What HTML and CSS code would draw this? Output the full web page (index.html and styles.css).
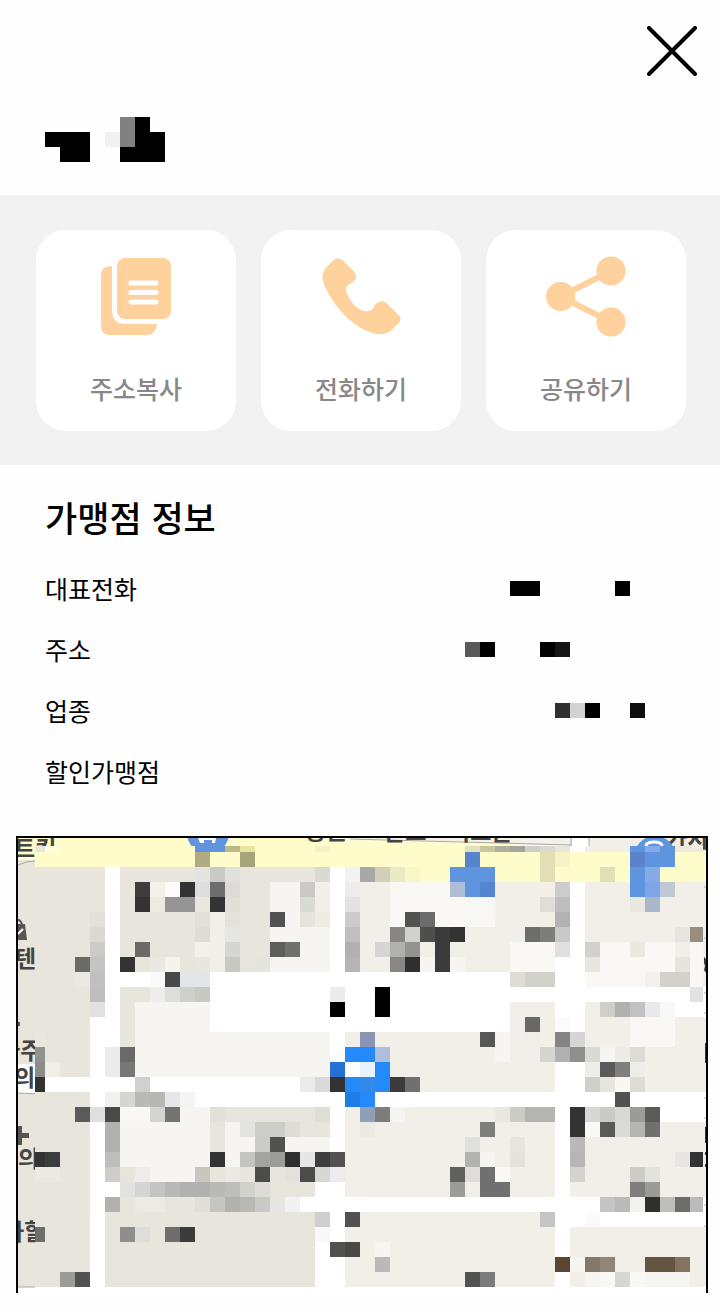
FILE: index.html
```html
<!doctype html>
<html lang="ko">
  <head>
    <meta charset="utf-8">
    <meta name="viewport" content="width=device-width, initial-scale=1">
    <title>가맹점 정보</title>
    <link rel="stylesheet" href="styles.css">
  </head>
  <body>
    <header class="header">
      <button type="button" class="close" aria-label="닫기">
        <svg viewBox="0 0 50 50" width="50" height="50">
          <path d="M2 2L48 48M48 2L2 48" stroke="#000" stroke-width="4" stroke-linecap="round"/>
        </svg>
      </button>
    </header>
    <div class="store-name">
      <svg class="blocks" viewBox="0 0 120 45" width="120" height="45">
        <path d="M0 15h45v30h-30v-15h-15zM90 0h15v15h15v30h-45v-15h15z"/>
        <path fill="#808080" d="M75 0h15v30h-15z"/>
        <path fill="#f1f1f1" d="M60 15h15v15h-15z"/>
      </svg>
    </div>
    <div class="actions">
      <button type="button" class="card">
        <svg class="icon" viewBox="0 0 80 80">
          <path d="M16 10V54Q16 68 29 68H61Q60 79 51 79H14Q5 79 5 70V19Q5 10 16 10Z"/>
          <rect x="21" y="2" width="54" height="61" rx="8"/>
          <path d="M35 27H60M35 36.5H60M35 46H60" stroke="#fff" stroke-width="5" stroke-linecap="round"/>
        </svg>
        <span>주소복사</span>
      </button>
      <button type="button" class="card">
        <svg class="icon" viewBox="0 0 80 80">
          <path d="M5 12L11 5.500Q16 0 22 4.500L32 14.500Q38 21 32.500 25.500Q30.500 28 28 28Q23.500 32 26 38Q32 52 43 55Q50 56 52.500 52Q53 49 56 47Q61 43.500 66 47.500L77 58.500Q81.500 62.500 78 66.500L69 75.500Q62 79.500 53 77.500Q24 69 5 33Q-2 19 5 12Z"/>
        </svg>
        <span>전화하기</span>
      </button>
      <button type="button" class="card">
        <svg class="icon" viewBox="0 0 80 80">
          <path d="M65 15L14.500 40.500L65 66" fill="none" stroke="#ffd19d" stroke-width="6"/>
          <circle cx="65" cy="15" r="14.600"/>
          <circle cx="14.600" cy="40.500" r="14.600"/>
          <circle cx="65" cy="66" r="14.600"/>
        </svg>
        <span>공유하기</span>
      </button>
    </div>
    <section class="info">
      <h2>가맹점 정보</h2>
      <dl>
        <div class="row">
          <dt>대표전화</dt>
          <dd>
            <svg class="blocks" viewBox="0 0 210 15" width="210" height="15">
              <path d="M45 0h30v15h-30zM150 0h15v15h-15z"/>
            </svg>
          </dd>
        </div>
        <div class="row">
          <dt>주소</dt>
          <dd>
            <svg class="blocks" viewBox="0 0 210 15" width="210" height="15">
              <path fill="#595959" d="M0 0h15v15h-15z"/>
              <path d="M15 0h15v15h-15zM75 0h15v15h-15z"/>
              <path fill="#151515" d="M90 0h15v15h-15z"/>
            </svg>
          </dd>
        </div>
        <div class="row">
          <dt>업종</dt>
          <dd>
            <svg class="blocks" viewBox="0 0 210 15" width="210" height="15">
              <path fill="#303030" d="M90 0h15v15h-15z"/>
              <path fill="#d2d2d2" d="M105 0h15v15h-15z"/>
              <path d="M120 0h15v15h-15z"/>
              <path fill="#0d0d0d" d="M165 0h15v15h-15z"/>
            </svg>
          </dd>
        </div>
        <div class="row">
          <dt>할인가맹점</dt>
          <dd></dd>
        </div>
      </dl>
    </section>
    <div class="map">
      <svg viewBox="18 838 688 455">
        <defs>
          <clipPath id="tiles-clip"><path d="M35 846H703V1293H35Z"/></clipPath>
        </defs>
        <!-- ground and roads -->
        <path fill="#e7e5dc" d="M18 838H60V1287H18Z"/>
        <path fill="#fefccb" d="M18 838H320L572 846V860H18Z"/>
        <path fill="#f2f1ee" d="M350 838H572V846Z"/>
        <path fill="#f2efe8" d="M589 838H706V1287H589Z"/>
        <path fill="#fefccb" d="M700 852H706V882H700Z"/>
        <path fill="#fff" d="M18 1064H40V1093H18ZM700 987H706V1017H700ZM700 1092H706V1122H700ZM700 1197H706V1227H700Z"/>
        <path fill="none" stroke="#aaa8a2" d="M18 865Q26 861 35 861M18 1093L36 1094M18 1287H36M350 839L572 845M571 838V846M589 838V846"/>
        <path fill="none" stroke="#aaa" d="M704 887h2M704 938h2M704 993h2M704 1013h2M704 1098h2M704 1118h2M704 1205h2M704 1226h2"/>
        <path fill="#333" d="M705 1043h1v20h-1zM705 1127h1v16h-1zM704 957l2 2v14l-2-3 1-4-1-3zM705 1152h1v3h-1zM705 1164h1v3h-1z"/>
        <!-- labels and markers cut by the edges -->
        <g class="place">
          <text x="14" y="857">트킹</text>
          <text x="305" y="839">송골</text>
          <text x="384" y="840">든드</text>
          <text x="449" y="840">미크든</text>
          <text x="666" y="847">가지</text>
          <text x="15" y="967">텐</text>
          <text x="-1" y="1059">아주</text>
          <text x="14" y="1086">의</text>
          <text x="18" y="1167">의</text>
          <text x="3" y="1240">하할</text>
        </g>
        <circle cx="208" cy="833" r="21" fill="#5f94de"/>
        <path d="M198 838h18l-1 5h-3v-3h-8v3h-4z" fill="#fff"/>
        <circle cx="655" cy="857" r="21" fill="#5f94de"/>
        <path d="M646 846Q646 842 654 842T662 846" fill="none" stroke="#fff" stroke-width="3"/>
        <path d="M18 924h7l2 16h-9z" fill="#555"/>
        <path d="M18 920q3 0 4 5" fill="none" stroke="#555" stroke-width="2"/>
        <path d="M18 934l5-5" stroke="#fff" stroke-width="2"/>
        <path d="M18 1126h4v7h7v5h-7v7h-4zM18 1022h2v4h-2z" fill="#555"/>
        <g id="tiles" clip-path="url(#tiles-clip)" shape-rendering="crispEdges"></g>
      </svg>
    </div>
    <script src="map.js"></script>
  </body>
</html>
```

FILE: styles.css
```css
body {
  margin: 0;
  background: #fefefe;
  color: #000;
  font-family: "Noto Sans CJK KR", sans-serif;
  font-size: 25px;
}
button {
  border: 0;
  padding: 0;
  font: inherit;
  cursor: pointer;
}
svg {
  display: block;
}
.header {
  display: flex;
  justify-content: flex-end;
  padding: 26px 23px 0;
}
.close {
  background: none;
}
.store-name {
  padding: 41px 45px 33px;
}
.blocks {
  shape-rendering: crispEdges;
}
.actions {
  display: grid;
  grid-template-columns: repeat(3, 1fr);
  gap: 25px;
  padding: 35px 34px 34px 36px;
  background: #f2f2f2;
}
.card {
  display: flex;
  flex-direction: column;
  align-items: center;
  gap: 34px;
  padding: 26px 0 25px;
  border-radius: 30px;
  background: #fff;
  color: #888;
  font-weight: 500;
  line-height: 36px;
}
.icon {
  width: 80px;
  height: 80px;
  overflow: visible;
  fill: #ffd19d;
}
.info {
  padding: 25px 45px 34px;
}
.info h2 {
  margin: 0 0 14px;
  font-size: 35px;
  font-weight: 500;
  line-height: 54px;
}
.info dl {
  margin: 0;
}
.row {
  display: flex;
  justify-content: space-between;
  align-items: center;
  line-height: 61px;
}
.row dd {
  margin: 0;
}
.map {
  margin: 0 12px 15px 16px;
  border: 2px solid #000;
  border-bottom: 0;
  background: #fff;
}
.map svg {
  width: 100%;
}
.place {
  font-size: 23px;
  font-weight: 700;
  fill: #444;
}
```

FILE: map.js
```js
// Each row is a list of runs: start column + colour, up to the next run.
const SIZE = 15;
const TOP = 837;
const LAST = 47;
const colors = {
  w: '#ffffff', // road
  y: '#fefccb', // main road
  b: '#e7e5dc',
  l: '#f2efe8',
  p: '#f6f5f1',
  o: '#f9f8f4',
  k: '#333333',
  m: '#5f94de',
  c: '#248afc'
};

const rows = [
  '2#e8e6dc 3#fefcda 4y 13m 15#bdb987 16#e9e5a0 17y 21#f5f0c8 22y 31#e3e0c0 32#c8c5a0 33#b0ae9c 34#a5a5a0 35#cfcfc9 36#dcdacf 37#e8e5dd 38w 39l 42m 43#82abe8 44m 45#eeebdd',
  '2y 13#b0ab82 14y 16#a7a37b 17y 31#5785cb 32y 36#e3dfb5 37#f7f3c4 38y 42#5b82ca 43m 45y',
  '2b 7w 8b 13#e4e5e2 14#c9cac6 15#e0e0dc 16b 21#dadad5 22w 23#f3f3f2 24#a8a8a7 25#d0d0b8 26#e9e9c4 27#faf6c8 28y 30m 33y 36#e3dfb5 37y 40#e3dfb5 41y 42m 43#82abe8 44y',
  '2b 7w 8b 9#3d3d3d 10#f3f1ec 11#fbfbfa 12k 13#dddddf 14#6d6d6d 15#dcdbd5 16b 18p 20#c9cac5 21l 22w 23#ececed 24l 26o 30#afbdd7 31m 32#5585d0 33l 37#cccccb 38w 39l 42m 43#7da6e6 44#bfc9d6 45l',
  '2b 7w 8b 9k 10#edeae2 11#959595 13#e9e7e0 14k 15#e0ded6 16b 18p 20#dadad5 21l 22w 23#e2e2e2 24l 26o 33l 36#deddd8 37#bebebd 38w 39l 42#e9e8e2 43#a9b8c8 44l',
  '2b 6#e2e0d8 7w 8b 13#e1dfd7 14l 15#e2e1da 16b 18#525252 19p 20#e5e3dc 21#eeebe3 22w 23#cbcbcb 24l 26o 27#525252 28#6b6b6b 29o 33l 37#b2b2b2 38w 39l',
  '2b 6#dbd9d1 7w 8b 13#dedcd4 14l 15#e6e6e2 16b 18p 22w 23#bfbfbf 24l 26#868686 27#d1d1d0 28#4e4e4c 29#3b3b3b 30k 31l 35#6d6d6c 36#7d7d7b 37#c9c9c9 38w 39l 45#e6e5df 46#998d7e',
  '2b 6#cccbc5 7w 8b 9#6a6b67 10b 13#f3f0e9 14l 15#d5d6d3 16b 18#5e5e5c 19#707070 20p 22w 23#b1b1b1 24l 25#d5d5d3 26#b0b1ad 27#92938f 28l 29#3b3b3b 30l 34o 37#e0e0e0 38w 39#d1d1ce 40o 42#e9e8e1 43o 45l 46o',
  '2b 5#6a6a67 6#c4c4c5 7w 8k 9b 10#e9e8e3 11#f4f3ee 12b 13#e7e6e0 14l 15#c7c8c1 16b 17#e5e5e0 18p 22w 23#b5b5b5 24l 26#878787 27#2f2f2e 28p 29#3b3b3b 30p 31l 34o 37w 39#e7e6df 40o 45#e5e4de 46o',
  '2b 5#ebe9e2 6#c0c0c1 7w 10#fafafa 11#484848 12#e4e5e6 14w 34#dedcd5 35#d2d2cd 37w 39o 43#f2f1ee 44#d2d1cb 46o',
  '2b 6#bebebf 7w 8b 10#ededea 11#dddeda 12#cfd0ca 13#c8c9c1 14w 22#ebebeb 23w 25#000 26w 46#e2e2e3',
  '2b 6#e0e1e3 7w 8b 9p 14w 22#000 23w 25#000 26w 34l 37w 39l 40#cfcfca 41#b0b0b0 42#c1c1c1 43#e8e9ea 44#f8f8f8 45w',
  '2b 6w 8b 9p 14w 34l 35#686868 36l 37#fbfbfb 38w 39l 42o 45l',
  '2#e9e7e0 3b 6w 8b 9p 22w 23l 24#8b94b3 25l 32#565654 33p 34l 35#f0eeea 36l 37#848483 38#d5d5d5 39l 42o 45l',
  '2#929292 3b 6w 7#ebebeb 8#6a6a6a 9p 22w 23c 25#adbfdd 26l 33p 34l 36#d5d5d1 37#b0b0b0 38#8f8f8f 39#dadad4 40p 41#ecebe6 42#dddcd6 43l',
  '2#8c8c8c 3#f1eee6 4b 6w 7#ebebec 8#777777 9p 22#276fd2 23w 24#e9f3fe 25c 26l 37w 39#edede9 40#5a5a5a 41#7f7f7f 42#ededea 43l',
  '2k 3w 9#d0d0d0 10w 20#ebebec 21#dadada 22k 23c 24#3389ea 25c 26#3b3b3b 27#707070 28l 37w 39#d0d0cb 40#e6e5de 41#f8f7f3 42#dddbd4 43l',
  '2b 6w 7#f1f1f0 8#d5d5d1 9#b9b9b7 10#b7b8b5 11#e7e7e9 12#f4f4f3 13w 23#1f7de8 24c 25w 41#525252 42w',
  '2b 5#5a5a5a 6#e0dfdf 7#494947 8o 10#d4d4d0 11#737372 12p 14#e3e1d7 15b 21#dfded6 22w 23l 24#909fb8 25#7d7d7b 26p 27l 33#e9e7df 34#ccccc7 35#b4b4b2 37w 38k 39#d7d7d5 40#cacac9 41#d8d8d7 42#9b9b9a 43#5a5a59 44w',
  '2b 6w 7#b1b1af 8p 14b 15p 16#e3e3df 17#cdcec7 19#deddd4 20b 22w 23l 24#ece9e2 25l 32#7e7e7d 33l 37w 38k 39o 40#5a5a59 41#dadad7 42#b4b4b1 43#707070 44l',
  '2b 6w 7#b1b1af 8p 14b 15p 17#cbccca 18#525252 19p 22w 23l 31#dfdfdb 32l 34#e6e5df 35l 37w 38#b9b9b8 39l',
  '2k 3#3c3c3c 4b 6w 7#bebebc 8p 14k 15p 16#c4c4c3 17#a3a3a1 18#9c9c9a 19#2f2f2f 20#e6e6e7 21#3f3f3f 22#525252 23l 31#b2b2af 32p 33l 34#e3e2dd 35l 37w 38#b6b6b4 39l 45#e8e6e1 46k',
  '2#ebe9e2 4b 6w 7#d0ccc7 8b 9#efede7 10p 13#c8c6bd 14b 15#ebe9e2 16b 17#4c4c4a 18b 19#e2e1db 20#4c4c4c 21#d8d8d3 22#ececed 23l 30#606060 31#deddda 32#707070 33o 34l 37w 38#d3d3ce 39l 42#ccccc7 43#e4e2dc 44l',
  '2b 6w 8#e2e2e1 9#d5d5d6 10#c4c4c2 11#b9b9b7 12#b1b1af 14#b9b9b7 15#bebebc 16#d1d2cb 17#deddd5 18b 21w 23l 30#9b9b9a 31l 32#707070 34l 37w 38l 42#7e7e7c 43#9b9b98 44l',
  '2b 6w 7#b1b2ae 8b 9#edeae2 11b 13#e0ded6 14#c6c6c1 15#b1b2ae 16#b8b8b5 17#c9c9c7 18#e5e5e4 19#f1f1f1 20w 40#c4c4c5 41#bababa 42#f3f2ef 43#2f2f2f 44#bebebd 45#6d6d6c 46#bababa',
  '2b 6w 7b 9#e9e6dd 10b 21#cfcfcf 22w 23#525252 24l 36#c6c4c5 37w 39#fbfafa 40w',
  '2#6d6d6b 3b 6w 7b 8#8e8e8d 9#dddddb 10b 11#6d6d6b 12#3b3b3b 13b 21#f8f8f6 22w 23l 37w 38l',
  '2b 6w 7b 21w 22#525252 23#484845 24l 25p 26l 37w 38l',
  '2b 6w 7b 21w 23l 25#b9b9b7 26l 37#5a4733 38p 39#84786a 40#908577 41l 43#645541 45#84745f 46l',
  '2b 4#9b9b98 5#525252 6w 7b 21w 23l 31#525252 32#7c7c7c 33l 37w 38l 39p 40o 41#d6d6d3 42o 43p 46l',
  '2w'
];

const tiles = document.getElementById('tiles');

rows.forEach((row, y) => {
  const runs = row.split(' ').map((run) => {
    const [, col, color] = run.match(/^(\d+)(.+)$/);
    return { col: Number(col), color: colors[color] || color };
  });
  runs.forEach((run, i) => {
    const end = i + 1 < runs.length ? runs[i + 1].col : LAST;
    const rect = document.createElementNS('http://www.w3.org/2000/svg', 'rect');
    rect.setAttribute('x', run.col * SIZE);
    rect.setAttribute('y', TOP + y * SIZE);
    rect.setAttribute('width', (end - run.col) * SIZE);
    rect.setAttribute('height', SIZE);
    rect.setAttribute('fill', run.color);
    tiles.appendChild(rect);
  });
});
```
